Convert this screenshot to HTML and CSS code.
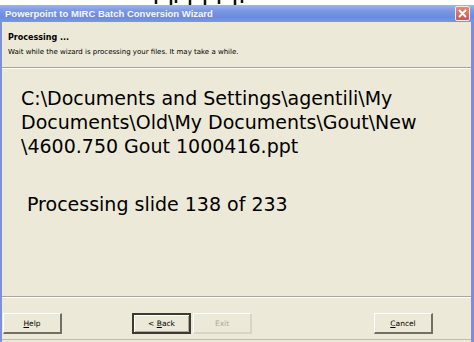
FILE: index.html
```html
<!DOCTYPE html>
<html>
<head>
<meta charset="utf-8">
<link rel="stylesheet" href="styles.css">
</head>
<body>
<div class="behind">
  <svg width="474" height="5" viewBox="0 0 474 5">
    <path d="M156 0 V4 M171 0 V5 M176 0 V3 M190 0 V5 M205 0 V5 M219 0 V4 M235 0 V5 M242 0 V3" stroke="#111" stroke-width="2.5"/>
  </svg>
</div>
<div class="window">
  <div class="titlebar">
    <span class="title">Powerpoint to MIRC Batch Conversion Wizard</span>
    <span class="close"><svg width="13" height="13" viewBox="0 0 13 13"><path d="M3.5 3.5 L9.5 9.5 M9.5 3.5 L3.5 9.5" stroke="#fff" stroke-width="1.8" stroke-linecap="round"/></svg></span>
  </div>
  <div class="header">
    <div class="h-title">Processing ...</div>
    <div class="h-sub">Wait while the wizard is processing your files. It may take a while.</div>
  </div>
  <div class="sep"></div>
  <div class="content">
    <div class="path">C:\Documents and Settings\agentili\My Documents\Old\My Documents\Gout\New<br>\4600.750 Gout 1000416.ppt</div>
    <div class="status">Processing slide 138 of 233</div>
  </div>
  <div class="sep"></div>
  <div class="buttons">
    <button class="btn help"><u>H</u>elp</button>
    <div class="spacer1"></div>
    <button class="btn default">&lt; <u>B</u>ack</button>
    <button class="btn disabled">Exit</button>
    <div class="spacer2"></div>
    <button class="btn cancel"><u>C</u>ancel</button>
  </div>
  <div class="bottom"></div>
</div>
</body>
</html>
```
FILE: styles.css
```css
html, body {
  margin: 0;
  padding: 0;
  background: #ffffff;
  width: 474px;
  height: 342px;
  overflow: hidden;
}
.behind {
  height: 5px;
  overflow: hidden;
}
.behind svg {
  display: block;
}
.window {
  height: 337px;
  display: flex;
  flex-direction: column;
  background: #ece9d8;
  border-left: 2px solid #7d90d8;
  border-right: 3px solid #7b8edb;
  box-sizing: border-box;
}
.titlebar {
  height: 17px;
  margin-left: -2px;
  margin-right: -3px;
  background: linear-gradient(#9db4ef 0%, #7a97e4 35%, #6c8ae0 70%, #7b96e2 100%);
  display: flex;
  align-items: center;
  padding-left: 5px;
  padding-right: 4px;
  justify-content: space-between;
}
.title {
  color: #f4f6ff;
  font-family: "Liberation Sans", Arial, sans-serif;
  font-weight: bold;
  font-size: 9.5px;
  letter-spacing: 0;
}
.close {
  width: 13px;
  height: 13px;
  background: linear-gradient(#e58a7e, #c65a4e);
  border: 1px solid #f0e6ef;
  border-radius: 2px;
  display: flex;
}
.header {
  height: 45px;
  padding-left: 6px;
  display: flex;
  flex-direction: column;
  justify-content: center;
  gap: 6px;
  font-family: "DejaVu Sans", sans-serif;
}
.h-title {
  font-weight: bold;
  font-size: 8px;
  color: #000;
}
.h-sub {
  font-size: 7px;
  color: #000;
}
.sep {
  height: 1px;
  background: #aca899;
  border-bottom: 1px solid #ffffff;
}
.content {
  flex: 1;
  font-family: "DejaVu Sans", sans-serif;
  color: #000;
  font-size: 19px;
  padding-top: 17px;
}
.path {
  padding-left: 19px;
  padding-right: 12px;
  line-height: 24px;
}
.status {
  padding-left: 25px;
  margin-top: 34px;
  line-height: 24px;
}
.buttons {
  height: 41px;
  display: flex;
  align-items: flex-start;
  padding-top: 15px;
  padding-left: 1px;
  box-sizing: border-box;
}
.btn {
  height: 21px;
  width: 59px;
  box-sizing: border-box;
  background: #ece9d8;
  font-family: "DejaVu Sans", sans-serif;
  font-size: 7.5px;
  color: #000;
  padding: 0;
  border-top: 1px solid #ffffff;
  border-left: 1px solid #ffffff;
  border-right: 2px solid #716f64;
  border-bottom: 2px solid #716f64;
}
.default {
  border: 2px solid #3c3a33;
  box-shadow: inset 1px 1px 0 #ffffff, inset -1px -1px 0 #aca899;
}
.disabled {
  color: #aca899;
  margin-left: 2px;
  border-right-color: #d8d5c6;
  border-bottom-color: #d8d5c6;
}
.spacer1 { width: 70px; }
.spacer2 { width: 122px; }
.bottom {
  height: 2px;
  border-top: 1px solid #c0bdb0;
  background: #ece9d8;
}
```
